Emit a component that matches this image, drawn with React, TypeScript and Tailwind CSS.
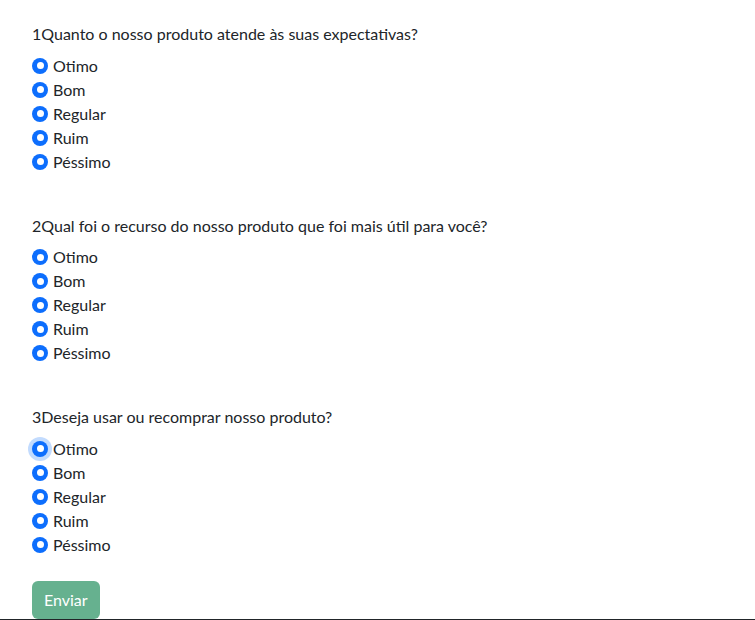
import React from "react";

const questions = [
  "Quanto o nosso produto atende às suas expectativas?",
  "Qual foi o recurso do nosso produto que foi mais útil para você?",
  "Deseja usar ou recomprar nosso produto?",
];

const options = ["Otimo", "Bom", "Regular", "Ruim", "Péssimo"];

const Radio = ({ focused }: { focused?: boolean }) => (
  <span
    className={`flex h-4 w-4 shrink-0 items-center justify-center rounded-full bg-[#0d6efd] ${
      focused ? "shadow-[0_0_0_4px_rgba(13,110,253,0.25)]" : ""
    }`}
  >
    <span className="h-[7px] w-[7px] rounded-full bg-white" />
  </span>
);

export default function App() {
  return (
    <div className="h-[620px] overflow-hidden border-b border-[#212529] bg-white font-['Lato',sans-serif] text-base leading-6 text-[#212529]">
      <div className="flex flex-col items-start gap-10 px-8 pt-[22px]">
        {questions.map((q, qi) => (
          <div key={qi} className="flex flex-col gap-[7.5px]">
            <p>
              {qi + 1}
              {q}
            </p>
            <div>
              {options.map((o, oi) => (
                <label key={o} className="flex h-6 items-center gap-[5px]">
                  <Radio focused={qi === 2 && oi === 0} />
                  <span>{o}</span>
                </label>
              ))}
            </div>
          </div>
        ))}
        <button className="-mt-4 h-[38px] rounded-md bg-[#66b18f] px-3 text-white">
          Enviar
        </button>
      </div>
    </div>
  );
}
